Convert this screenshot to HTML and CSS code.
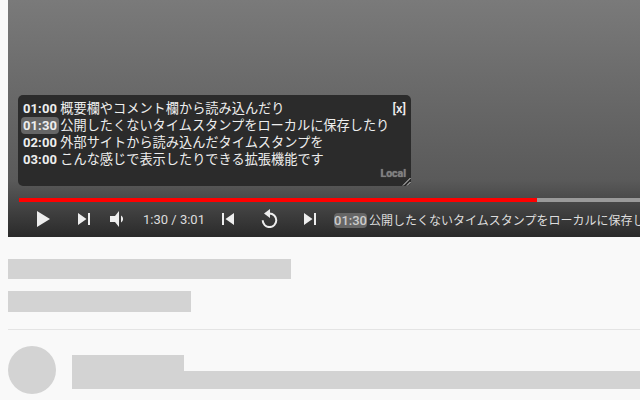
FILE: index.html
```html
<!DOCTYPE html>
<html lang="ja">
<head>
<meta charset="utf-8">
<title>Player</title>
<link rel="stylesheet" href="styles.css">
</head>
<body>
<div class="page">
  <section class="player">
    <div class="panel">
      <div class="rows">
        <div class="row"><span class="ts">01:00</span> 概要欄やコメント欄から読み込んだり</div>
        <div class="row"><span class="ts current">01:30</span> 公開したくないタイムスタンプをローカルに保存したり</div>
        <div class="row"><span class="ts">02:00</span> 外部サイトから読み込んだタイムスタンプを</div>
        <div class="row"><span class="ts">03:00</span> こんな感じで表示したりできる拡張機能です</div>
      </div>
      <span class="close">[x]</span>
      <span class="source">Local</span>
      <svg class="grip" viewBox="0 0 9 9"><path d="M1 8.500L8.500 1M5 8.500L8.500 5" /></svg>
    </div>
    <div class="progress"><div class="played"></div></div>
    <div class="controls">
      <svg class="icon play" viewBox="0 0 13 16"><path d="M0 0L13 8L0 16Z"/></svg>
      <svg class="icon next" viewBox="0 0 12 12"><path d="M0 0L8.500 6L0 12ZM10 0H12V12H10Z"/></svg>
      <svg class="icon vol" viewBox="0 0 14 16"><path d="M0 5H5L9 0V16L5 11H0ZM11 4.500C13.800 6 13.800 10 11 11.500Z"/></svg>
      <span class="time">1:30 / 3:01</span>
      <svg class="icon prev" viewBox="0 0 12 12"><path d="M0 0H2V12H0ZM12 0V12L3.500 6Z"/></svg>
      <svg class="icon replay" viewBox="0 0 17 19"><path d="M8.500 4.500A6.800 6.800 0 1 1 1.700 11.300" class="arc"/><path d="M9 0V9L3 4.500Z"/></svg>
      <svg class="icon next2" viewBox="0 0 12 12"><path d="M0 0L8.500 6L0 12ZM10 0H12V12H10Z"/></svg>
      <div class="chapter"><span class="ts badge">01:30</span><span class="chapter-text">公開したくないタイムスタンプをローカルに保存したり</span></div>
    </div>
  </section>
  <section class="meta">
    <div class="sk title"></div>
    <div class="sk sub"></div>
    <hr class="rule">
    <div class="comment">
      <div class="avatar"></div>
      <div class="lines">
        <div class="sk name"></div>
        <div class="sk text"></div>
      </div>
    </div>
  </section>
</div>
</body>
</html>
```
FILE: styles.css
```css
* { box-sizing: border-box; }
html, body { margin: 0; height: 100%; overflow: hidden; }
body { background: #f9f9f9; font-family: Roboto, "Noto Sans CJK JP", sans-serif; }
.page { padding-left: 8px; width: 640px; height: 400px; overflow: hidden; }
.player {
  height: 237px; width: 632px; padding-top: 95px; overflow: hidden;
  background: linear-gradient(#7a7a7a 0, #6d6d6d 70px, #5a5a5a 180px, #2a2a2a 237px);
}
.panel {
  position: relative; width: 393px; height: 91px; margin-left: 10px; padding: 5px 5px;
  background: #2b2b2b; border-radius: 5px; color: #eee; font-size: 13.200px; line-height: 17px;
}
.row { white-space: nowrap; height: 17px; }
.ts { font-weight: 700; font-size: 13px; font-family: Roboto, sans-serif; letter-spacing: .1px; }
.current { background: #666; border-radius: 4px; padding: 1px 2px; margin: 0 -2px; }
.close { position: absolute; top: 5px; right: 5px; font-size: 13px; font-weight: 500; font-family: Roboto, sans-serif; }
.source { position: absolute; right: 5px; bottom: 6px; font-size: 10.500px; line-height: 12px; font-weight: 700; color: #808080; text-shadow: 0 0 1px #808080; }
.grip { position: absolute; right: 0; bottom: 0; width: 9px; height: 9px; fill: none; stroke: #ddd; stroke-width: 1; }
.progress { height: 3.500px; margin: 12px 0 0 11px; width: 621px; background: #9a9a9a; }
.played { height: 100%; width: 518px; background: #f00; }
.controls { display: flex; align-items: center; height: 35px; white-space: nowrap; color: #ddd; font-size: 12px; }
.icon { flex: none; fill: #eee; }
.play { width: 13px; height: 16px; margin-left: 29px; }
.next { width: 12px; height: 12px; margin-left: 28px; }
.vol { width: 14px; height: 16px; margin: 0 0 1px 20px; }
.time { width: 61px; margin-left: 19px; flex: none; font-size: 13px; }
.prev { width: 12px; height: 12px; margin-left: 18px; }
.replay { width: 17px; height: 19px; margin: 0 0 2px 27px; }
.arc { fill: none; stroke: #eee; stroke-width: 2; }
.next2 { width: 12px; height: 12px; margin-left: 26px; }
.chapter { margin-left: 18px; color: #ddd; flex: none; }
.badge { background: #666; border-radius: 4px; font-weight: 500; letter-spacing: 0; display: inline-block; width: 33px; text-align: center; line-height: 15px; color: #ccc; }
.chapter-text { margin-left: 2px; }
.meta { padding-top: 22px; width: 632px; }
.sk { background: #d3d3d3; }
.title { width: 283px; height: 20px; }
.sub { width: 183px; height: 21px; margin-top: 12px; }
.rule { border: 0; height: 1px; background: #e4e4e4; margin: 17px 0 16px; }
.comment { display: flex; gap: 16px; }
.avatar { width: 48px; height: 48px; border-radius: 50%; background: #d3d3d3; flex: none; }
.lines { flex: 1; padding-top: 9px; }
.name { width: 112px; height: 16px; }
.text { height: 18px; }
```
